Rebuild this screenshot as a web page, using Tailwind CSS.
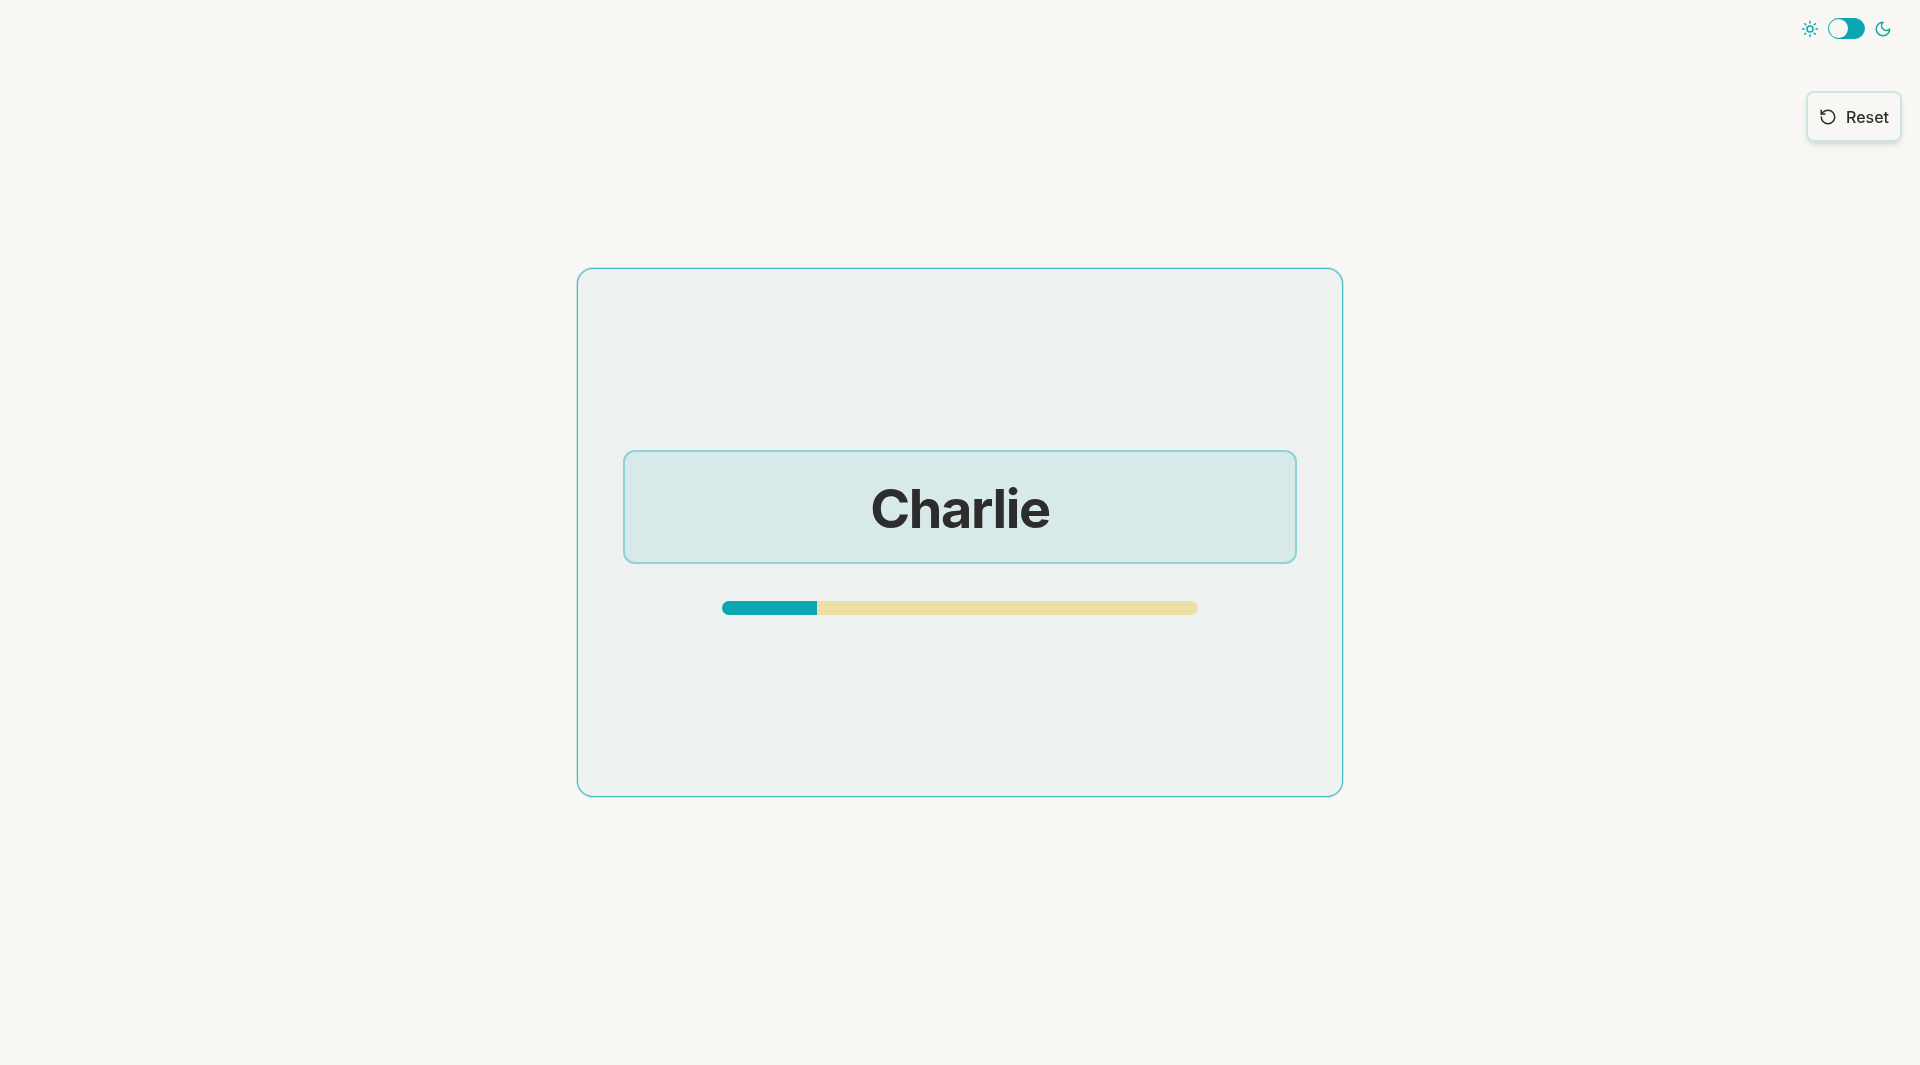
<!doctype html>
<html>
  <head>
    <meta charset="utf-8" />
    <title>Charlie</title>
    <script src="https://cdn.jsdelivr.net/npm/@tailwindcss/browser@4"></script>
  </head>
  <body class="h-screen overflow-hidden bg-[#f8f7f3] font-['Inter',sans-serif] text-[#2d2d2d]">
    <!-- Theme toggle -->
    <div class="fixed top-[18px] right-[28px] flex items-center gap-[9px] text-[#0ca5b0]">
      <svg class="size-[18px]" viewBox="0 0 24 24" fill="none" stroke="currentColor" stroke-width="2" stroke-linecap="round" stroke-linejoin="round">
        <circle cx="12" cy="12" r="4" />
        <path d="M12 2v2M12 20v2M4.93 4.93l1.41 1.41M17.66 17.66l1.41 1.41M2 12h2M20 12h2M6.34 17.66l-1.41 1.41M19.07 4.93l-1.41 1.41" />
      </svg>
      <button class="flex h-[21px] w-[37px] items-center justify-end rounded-full border-[1.5px] border-[#0ca5b0] bg-[#0ca5b0]">
        <span class="mr-auto size-[19px] rounded-full bg-[#f8f7f3]"></span>
      </button>
      <svg class="size-[18px]" viewBox="0 0 24 24" fill="none" stroke="currentColor" stroke-width="2" stroke-linecap="round" stroke-linejoin="round">
        <path d="M12 3a6 6 0 0 0 9 9 9 9 0 1 1-9-9Z" />
      </svg>
    </div>

    <!-- Reset -->
    <button class="fixed top-[91px] right-[18px] flex h-[51px] w-[96px] items-center justify-center gap-[9px] rounded-lg border-2 border-[#0ca5b0]/20 bg-[#f8f7f3] text-[16px] font-medium shadow-md">
      <svg class="size-[18px]" viewBox="0 0 24 24" fill="none" stroke="currentColor" stroke-width="2" stroke-linecap="round" stroke-linejoin="round">
        <path d="M3 12a9 9 0 1 0 9-9 9.75 9.75 0 0 0-6.74 2.74L3 8" />
        <path d="M3 3v5h5" />
      </svg>
      Reset
    </button>

    <main class="flex h-full items-center justify-center">
      <div class="flex h-[529px] w-[766px] flex-col items-center justify-center gap-[37px] rounded-2xl border border-[#0ca5b0]/75 bg-[#edf1f0] px-[45px] shadow-[0_0_0_1px_rgba(12,165,176,0.2)]">
        <div class="flex h-[114px] w-full items-center justify-center rounded-xl border-2 border-[#0ca5b0]/35 bg-[#d7e9e9]">
          <h1 class="translate-y-[2px] text-[54px] leading-none font-bold tracking-[-0.025em]">Charlie</h1>
        </div>
        <div class="h-[14px] w-[476px] overflow-hidden rounded-full bg-[#eedfa5]">
          <div class="h-full bg-[#0ca5b0]" style="width: 20%"></div>
        </div>
      </div>
    </main>
  </body>
</html>
